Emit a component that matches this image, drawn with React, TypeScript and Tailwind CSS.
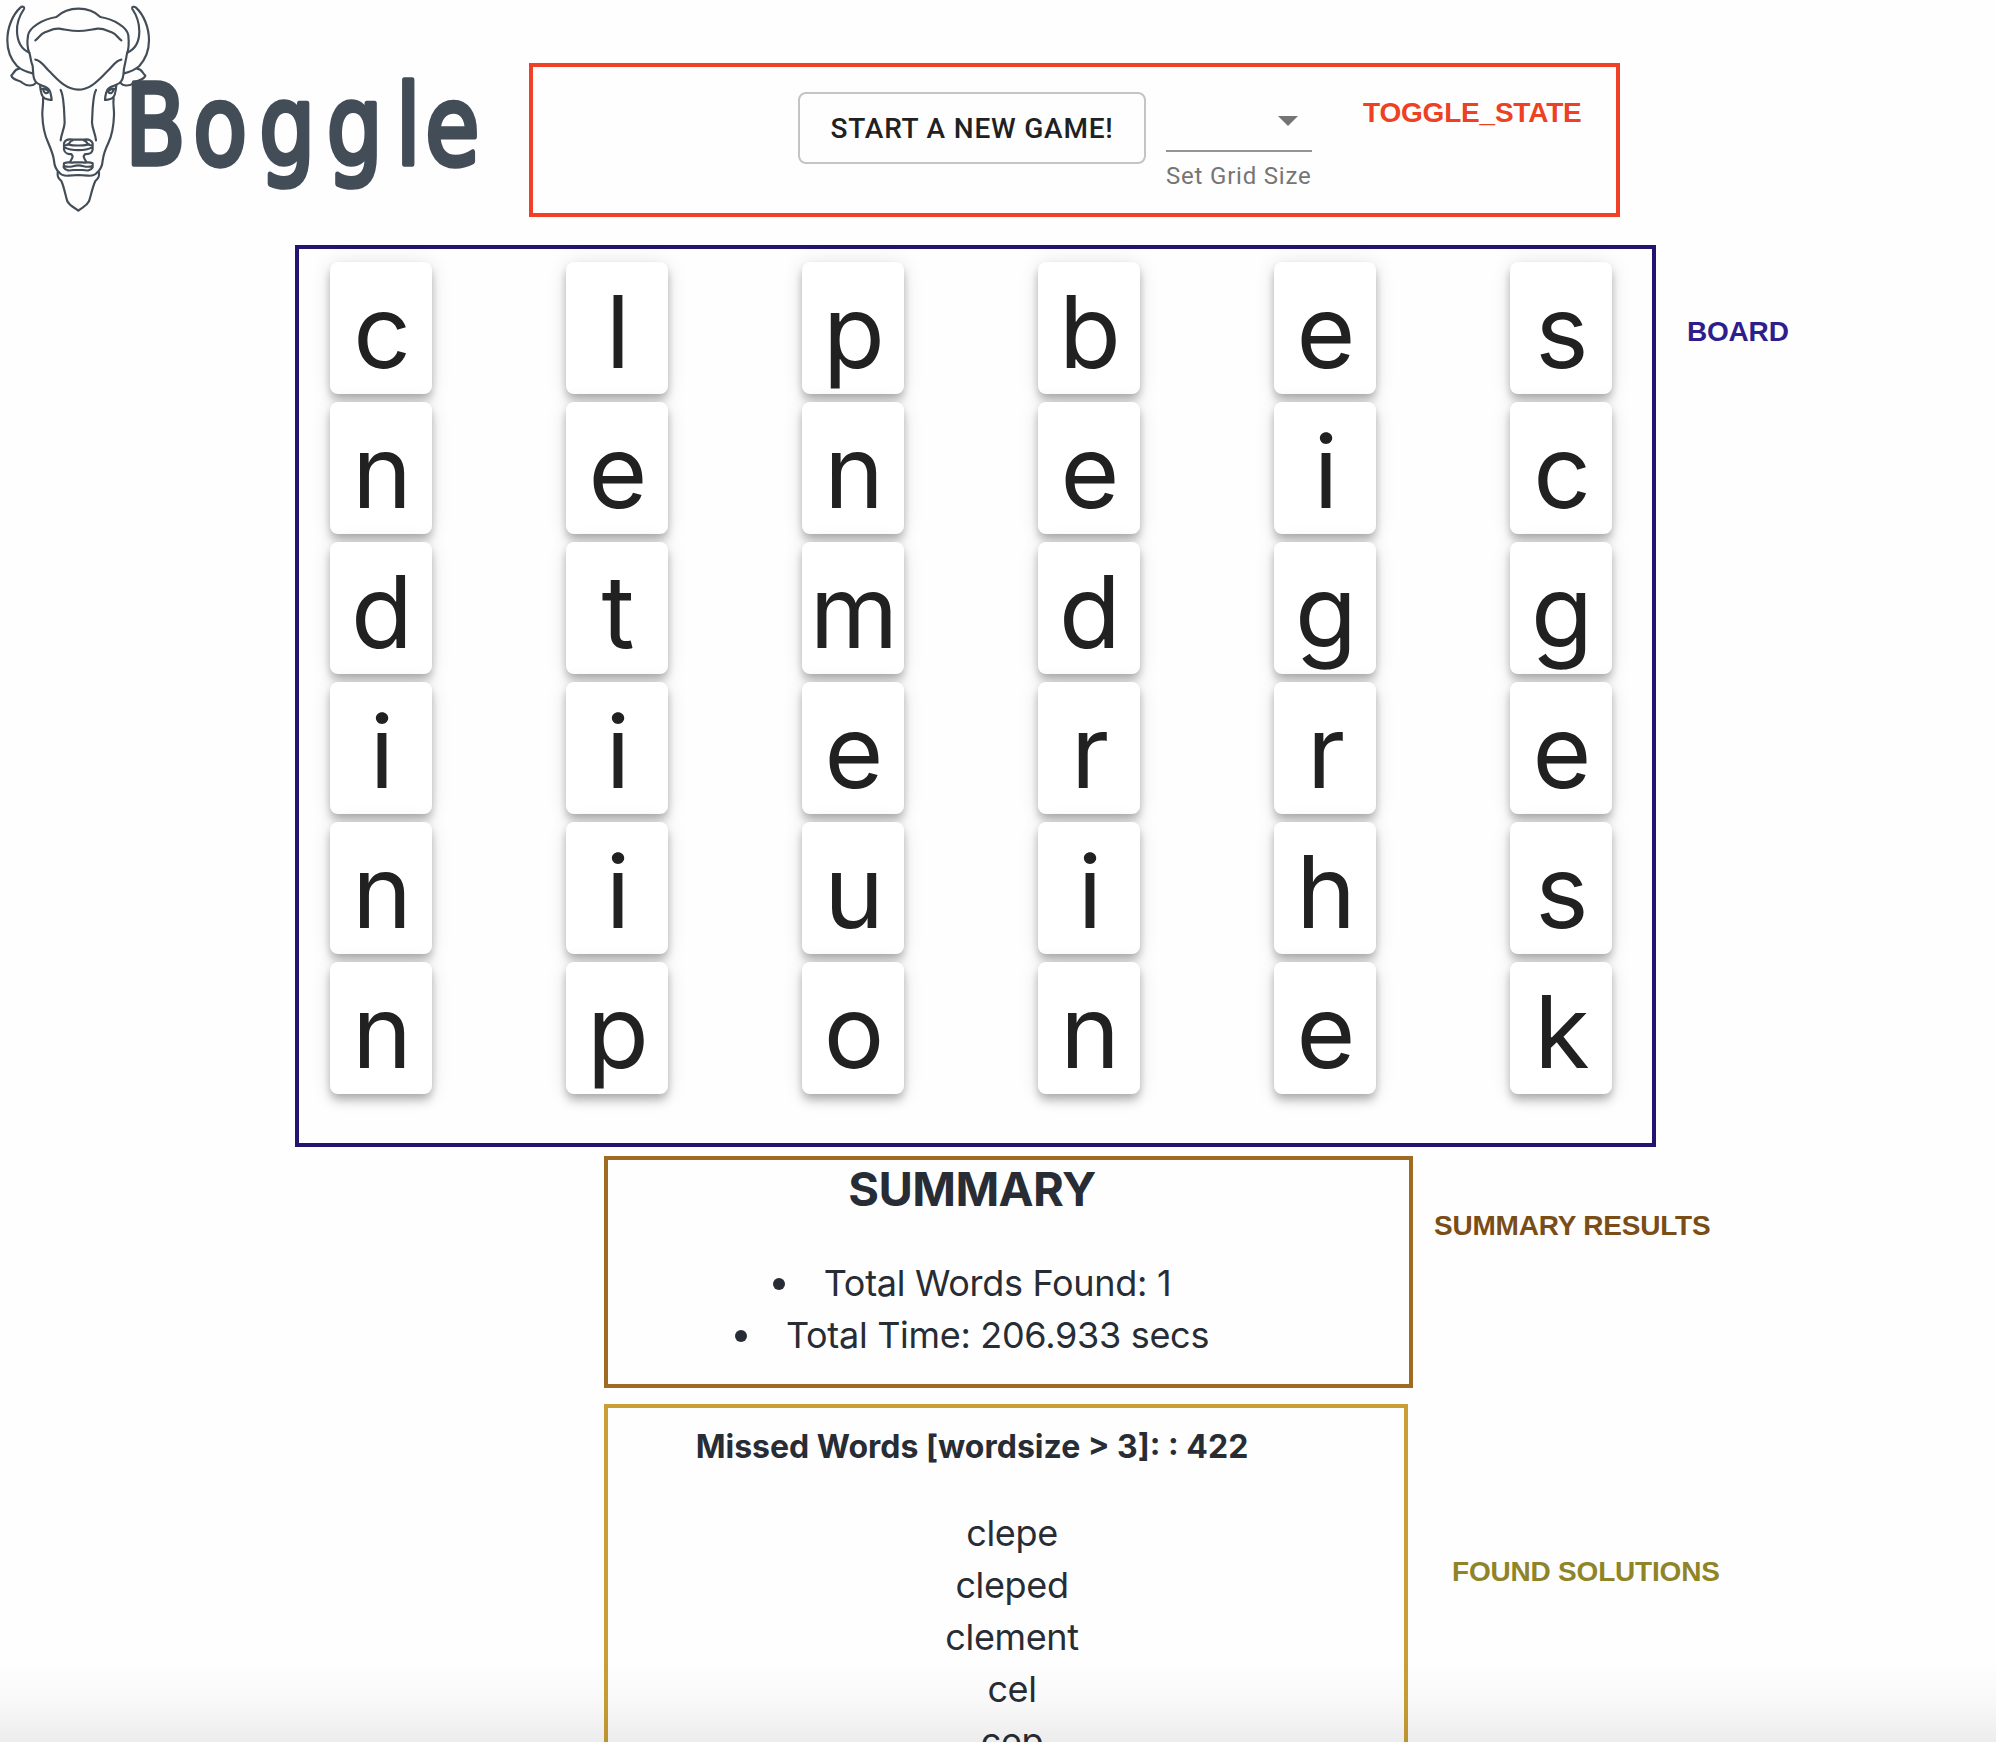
import React from "react";

const board = ["clpbes", "neneic", "dtmdgg", "iierre", "niuihs", "nponek"];
const words = ["clepe", "cleped", "clement", "cel", "cep"];

function Logo() {
  return (
    <svg className="block h-[217px] w-[529px] shrink-0" viewBox="0 0 529 217" role="img" aria-label="Boggle">
      <g transform="scale(0.33333)" fill="none" stroke="#434d57" strokeWidth="6.5" strokeLinecap="round" strokeLinejoin="round">
        {/* horns */}
        <path d="M88 158C64 148 52 124 51 94C50 68 59 46 72 27C74 20 66 18 61 23C38 44 22 82 22 121C22 155 31 177 51 198C64 210 80 216 98 220" />
        <path d="M382 158C405 148 418 124 418 94C418 68 410 46 397 27C395 20 402 18 408 23C431 44 447 82 447 121C447 155 437 177 418 198C405 210 389 216 372 220" />
        {/* ears */}
        <path d="M58 206C43 207 42 220 34 227C39 242 58 240 68 249C80 259 100 259 107 249" />
        <path d="M411 206C426 207 428 220 436 227C431 242 411 240 401 249C389 259 369 259 362 249" />
        {/* crown and face outline */}
        <path d="M122 255C105 249 101 239 100 225L98 198C91 181 91 164 88 158C80 141 82 120 84 106C88 82 127 58 169 51C182 39 202 26 235 26C268 26 287 37 301 51C343 58 382 82 385 106C387 126 388 144 381 160C378 180 375 190 372 206L370 225C369 239 365 249 347 255" />
        <path d="M106 121C118 113 120 103 135 97C151 91 158 85 177 86C197 88 211 93 235 93C259 93 273 88 293 86C312 85 319 91 335 97C350 103 352 113 364 121" />
        <path d="M106 179C123 181 132 198 148 214C173 239 198 269 235 269C272 269 296 239 322 214C339 198 348 181 364 179" />
        {/* eyes */}
        <path d="M120 255C121 270 124 290 134 295C142 300 151 299 155 300C155 291 152 283 151 277C148 263 134 260 120 255ZM124 266C132 266 140 268 145 273M130 270C131 278 138 282 144 278" />
        <path d="M349 255C348 270 346 290 336 295C328 300 319 299 315 300C315 291 317 283 319 277C321 263 335 260 349 255ZM346 266C338 266 330 268 325 273M340 270C339 278 332 282 326 278" />
        {/* cheeks */}
        <path d="M129 294C131 315 126 326 127 345C128 378 134 406 145 429C154 450 160 464 162 482C163 496 168 509 178 518C185 527 194 528 206 527L235 525L264 527C276 528 284 527 291 518C302 509 307 496 308 482C310 464 315 450 325 429C336 406 341 378 342 345C343 326 338 315 341 294" />
        <path d="M182 270C190 285 190 307 192 325L194 367C193 389 184 400 182 421M288 270C280 285 280 307 278 325L276 367C277 389 286 400 288 421" />
        {/* nose */}
        <path d="M192 430C195 421 205 417 217 419H252C264 417 274 421 278 430V449C276 460 265 463 255 462L251 469C251 474 254 476 259 486M192 430V449C194 460 205 463 214 462L218 469C218 474 215 476 210 486M192 435C213 440 204 422 218 421M278 435C257 440 265 422 251 421M202 433C220 437 249 437 267 433M194 442C214 453 256 453 276 442" />
        {/* mouth and beard */}
        <path d="M192 490C205 484 210 490 222 487H248C259 490 265 484 278 490V502C271 514 260 512 247 510H222C209 512 198 514 191 502ZM193 498C212 505 218 496 235 496C252 496 258 505 277 498" />
        <path d="M173 516C172 530 174 534 184 543C192 560 196 585 202 604C210 620 224 622 235 632C246 622 259 620 267 604C273 585 278 560 286 543C296 534 298 530 297 516" />
      </g>
      <text
        transform="scale(0.8 1)"
        x="156.5 241.5 324 408.5 495 531.5"
        y="164"
        fill="#434d57"
        stroke="#434d57"
        strokeWidth="5.5"
        strokeLinejoin="round"
        className="font-['DejaVu_Sans'] text-[110px]"
      >
        Boggle
      </text>
    </svg>
  );
}

function Tag({ className, children }: { className: string; children: React.ReactNode }) {
  return (
    <div className={`h-7 whitespace-nowrap pt-px font-['Liberation_Sans',sans-serif] text-[28px] font-bold leading-7 tracking-[-0.2px] ${className}`}>
      {children}
    </div>
  );
}

function Header() {
  return (
    <header className="flex h-[245px] items-start">
      <Logo />
      <div className="mt-[63px] flex h-[154px] w-[1091px] items-start border-4 border-[#f04026] font-[Roboto,sans-serif]">
        <button className="ml-[265px] mt-[25px] h-[72px] w-[348px] whitespace-nowrap rounded-lg border-2 border-[#c4c4c4] pt-px text-[28px] font-medium tracking-[0.8px] text-[#212121]">
          START A NEW GAME!
        </button>
        <div className="ml-5 mt-[25px] w-[146px]">
          <div className="flex h-[60px] justify-end border-b-2 border-[#949494] pr-[14px] pt-6">
            <svg className="h-[10px] w-5" viewBox="0 0 20 10" fill="#757575">
              <path d="M0 0H20L10 10Z" />
            </svg>
          </div>
          <div className="mt-3 whitespace-nowrap text-[24px] leading-6 tracking-[0.8px] text-[#757575]">Set Grid Size</div>
        </div>
        <Tag className="ml-[51px] mt-[31px] text-[#ee4023]">TOGGLE_STATE</Tag>
      </div>
    </header>
  );
}

export default function App() {
  return (
    <div className="relative h-[1742px] w-[1996px] overflow-hidden bg-[#fefefe] font-[Inter,sans-serif] text-[#282c34]">
      <Header />

      <section className="flex items-start pl-[295px]">
        <div className="h-[902px] w-[1361px] border-4 border-[#23156f] pl-[31px] pt-[13px]">
          <div className="grid w-[1282px] grid-cols-6 justify-between gap-x-[134px] gap-y-2">
            {board.flatMap((row, r) =>
              row.split("").map((letter, c) => (
                <div
                  key={`${r}-${c}`}
                  className="h-[132px] w-[102px] rounded-lg bg-white pl-[2px] text-center text-[101px] leading-[138px] text-[#212121] shadow-[0_4px_8px_-2px_rgba(0,0,0,0.2),0_8px_10px_0_rgba(0,0,0,0.14),0_2px_20px_0_rgba(0,0,0,0.12)]"
                >
                  {letter}
                </div>
              )),
            )}
          </div>
        </div>
        <Tag className="ml-[31px] mt-[72px] text-[#2f1d8c]">BOARD</Tag>
      </section>

      <section className="mt-[9px] flex items-start pl-[604px]">
        <div className="h-[232px] w-[809px] border-4 border-[#9f6a22]">
          <div className="w-[728px]">
            <h2 className="text-center text-[47px] font-bold leading-[58px] tracking-[-0.6px]">SUMMARY</h2>
            <ul className="mt-[39px] text-[36px] leading-[52px] tracking-[-0.3px]">
              {["Total Words Found: 1", "Total Time: 206.933 secs"].map((line) => (
                <li key={line} className="flex items-center justify-center gap-[39px] whitespace-nowrap">
                  <span className="mt-px size-3 rounded-full bg-[#282c34]" />
                  <span>{line}</span>
                </li>
              ))}
            </ul>
          </div>
        </div>
        <Tag className="ml-[21px] mt-[55px] text-[#7a4d17]">SUMMARY RESULTS</Tag>
      </section>

      <section className="mt-4 flex items-start pl-[604px]">
        <div className="h-[338px] w-[804px] overflow-hidden border-4 border-b-0 border-[#c99e34]">
          <div className="w-[728px] text-center">
            <h3 className="mt-[19px] whitespace-nowrap text-[32px] font-bold leading-10">Missed Words [wordsize &gt; 3]: : 422</h3>
            <ul className="mt-10 pl-20 text-[36px] leading-[52px] tracking-[-0.35px]">
              {words.map((word) => (
                <li key={word}>{word}</li>
              ))}
            </ul>
          </div>
        </div>
        <Tag className="ml-[44px] mt-[153px] text-[#8f8528]">FOUND SOLUTIONS</Tag>
      </section>

      <div className="pointer-events-none absolute inset-x-0 bottom-0 h-[84px] bg-gradient-to-b from-transparent via-black/2 to-black/7" />
    </div>
  );
}
